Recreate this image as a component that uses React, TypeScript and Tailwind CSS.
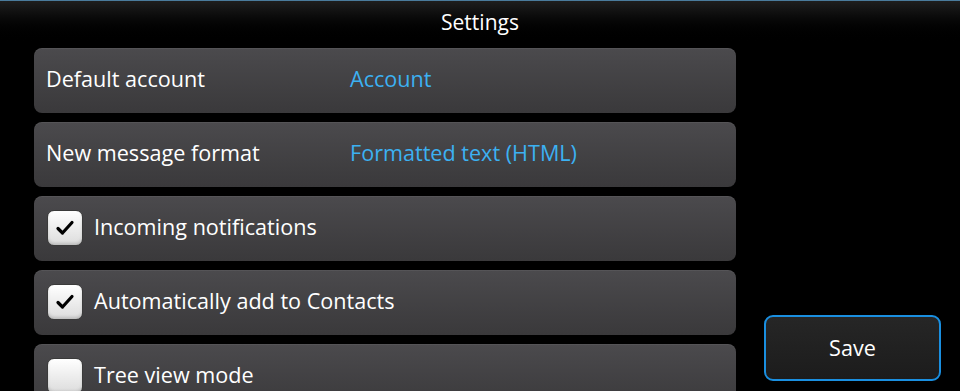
import React from "react";

const font = { fontFamily: '"Open Sans", "DejaVu Sans", sans-serif' };

function Check() {
  return (
    <svg viewBox="0 0 24 24" className="h-[24px] w-[24px]" fill="none" stroke="#000" strokeWidth="3.2" strokeLinecap="round" strokeLinejoin="round">
      <path d="M5 12.5l4.5 4.5L19 6.5" />
    </svg>
  );
}

function Checkbox({ checked }: { checked: boolean }) {
  return (
    <span className="flex h-9 w-9 shrink-0 items-center justify-center rounded-[7px] border border-[#3a3a3a] bg-gradient-to-b from-[#ffffff] to-[#dcdcdc] shadow-[inset_0_-2px_3px_rgba(0,0,0,0.15)]">
      {checked && <Check />}
    </span>
  );
}

function Row({ children }: { children: React.ReactNode }) {
  return (
    <div className="flex h-[65px] shrink-0 items-center rounded-[8px] bg-gradient-to-b from-[#4b4a4d] to-[#3a393b] pb-[2px] shadow-[inset_0_1px_0_rgba(255,255,255,0.06)]">
      {children}
    </div>
  );
}

function ValueRow({ label, value }: { label: string; value: string }) {
  return (
    <Row>
      <span className="w-[316px] shrink-0 pl-3 text-[21.6px] text-white">{label}</span>
      <span className="text-[21.6px] text-[#3cb1f2]">{value}</span>
    </Row>
  );
}

function CheckRow({ label, checked }: { label: string; checked: boolean }) {
  return (
    <Row>
      <div className="flex items-center gap-[11px] pl-[13px]">
        <Checkbox checked={checked} />
        <span className="text-[21.6px] text-white">{label}</span>
      </div>
    </Row>
  );
}

export default function App() {
  return (
    <div className="flex h-[391px] w-[960px] flex-col overflow-hidden bg-black" style={font}>
      <header className="flex h-[44px] shrink-0 items-center justify-center border-t border-[#4a7b9c] bg-gradient-to-b from-[#1e1e1e] to-[#000000]">
        <span className="text-[21px] text-white">Settings</span>
      </header>
      <div className="flex flex-1 gap-7 overflow-hidden pl-[34px] pt-[4px]">
        <div className="flex w-[702px] flex-col gap-[9px]">
          <ValueRow label="Default account" value="Account" />
          <ValueRow label="New message format" value="Formatted text (HTML)" />
          <CheckRow label="Incoming notifications" checked />
          <CheckRow label="Automatically add to Contacts" checked />
          <CheckRow label="Tree view mode" checked={false} />
        </div>
        <div className="flex flex-col justify-end pb-[10px]">
          <button className="h-[66px] w-[177px] rounded-[9px] border-2 border-[#1a8fe0] bg-gradient-to-b from-[#262626] to-[#1c1c1c] text-[21.6px] text-white">
            Save
          </button>
        </div>
      </div>
    </div>
  );
}
